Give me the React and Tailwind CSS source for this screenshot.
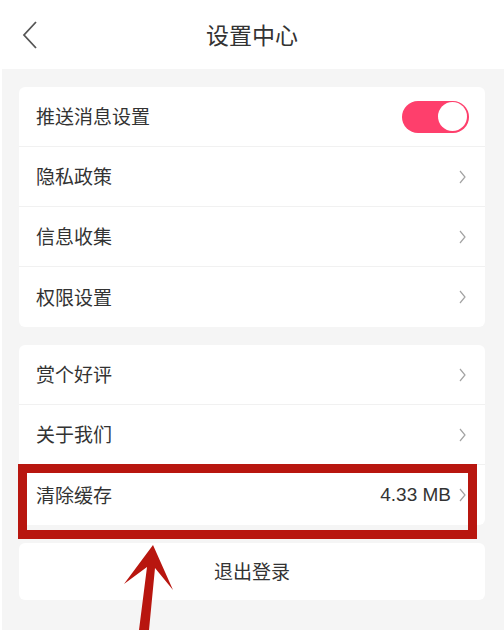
import React from 'react';

const Chevron = () => (
  <svg width="7" height="14" viewBox="0 0 7 14" className="shrink-0">
    <path d="M1 1 L6 7 L1 13" fill="none" stroke="#a3a3a3" strokeWidth="1.2" />
  </svg>
);

function Row({ label, right, last }) {
  return (
    <div className={`h-[60px] flex items-center justify-between pl-[17px] pr-[19px] ${last ? '' : 'border-b border-[#f1f1f1]'}`}>
      <span className="text-[19px] text-[#333]">{label}</span>
      {right}
    </div>
  );
}

export default function App() {
  return (
    <div
      className="w-[504px] h-[630px] bg-white overflow-hidden relative"
      style={{ fontFamily: '"Noto Sans CJK SC", "Noto Sans", sans-serif' }}
    >
      {/* header */}
      <div className="h-[69px] flex items-center pl-[22px] pr-[22px]">
        <svg width="16" height="28" viewBox="0 0 16 28" className="shrink-0">
          <path d="M14 1 L2 14 L14 27" fill="none" stroke="#555" strokeWidth="1.8" />
        </svg>
        <div className="flex-1 text-center text-[23px] text-[#333] pr-[16px]">设置中心</div>
      </div>

      <div className="ml-[2px] h-[561px] bg-[#f5f5f5] pt-[18px] pl-[17px] pr-[19px] flex flex-col gap-[18px]">
        <div className="bg-white rounded-[6px]">
          <Row
            label="推送消息设置"
            right={
              <div className="w-[67px] h-[32px] rounded-full bg-[#fe3f6c] flex items-center justify-end p-[2px] -mr-[3px]">
                <div className="w-[29px] h-[29px] rounded-full bg-white" />
              </div>
            }
          />
          <Row label="隐私政策" right={<Chevron />} />
          <Row label="信息收集" right={<Chevron />} />
          <Row label="权限设置" right={<Chevron />} last />
        </div>

        <div className="bg-white rounded-[6px]">
          <Row label="赏个好评" right={<Chevron />} />
          <Row label="关于我们" right={<Chevron />} />
          <Row
            label="清除缓存"
            last
            right={
              <div className="flex items-center gap-[8px]">
                <span className="text-[19px] text-[#333]" style={{ fontFamily: '"Liberation Sans", Arial, sans-serif' }}>4.33 MB</span>
                <Chevron />
              </div>
            }
          />
        </div>

        <div className="bg-white rounded-[6px] h-[57px] flex items-center justify-center">
          <span className="text-[19px] text-[#333]">退出登录</span>
        </div>
      </div>

      {/* annotation */}
      <div className="absolute left-[18px] top-[464px] w-[459px] h-[75px] border-[9px] border-[#b8160f]" />
      <svg className="absolute left-0 top-0" width="504" height="630" viewBox="0 0 504 630">
        <polygon points="153,545 173,590 155,568 149,630 139,630 147,567 124,584" fill="#b8160f" />
      </svg>
    </div>
  );
}
